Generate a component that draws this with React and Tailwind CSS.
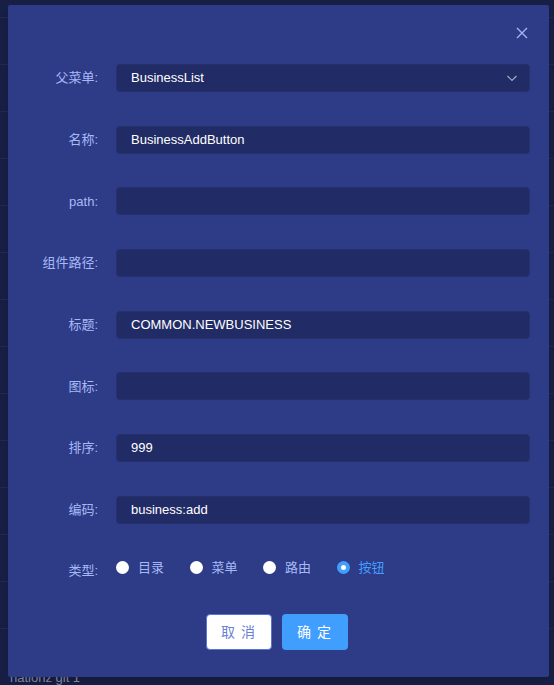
import React, { useState } from 'react';

const fields = [
    { label: '父菜单:', value: 'BusinessList', select: true },
    { label: '名称:', value: 'BusinessAddButton' },
    { label: 'path:', value: '' },
    { label: '组件路径:', value: '' },
    { label: '标题:', value: 'COMMON.NEWBUSINESS' },
    { label: '图标:', value: '' },
    { label: '排序:', value: '999' },
    { label: '编码:', value: 'business:add' },
];

const types = ['目录', '菜单', '路由', '按钮'];

const font = { fontFamily: '"Liberation Sans", "Noto Sans CJK SC", sans-serif' };

const App = () => {
    const [type, setType] = useState('按钮');

    return (
        <div className="relative w-[554px] h-[685px] overflow-hidden bg-[#171f45]" style={font}>
            {/* table rows behind the modal */}
            <div className="pt-[17px]">
                {Array.from({ length: 14 }).map((_, i) => (
                    <div key={i} className="h-[47px] border-t border-[#1f2858]" />
                ))}
            </div>
            <div className="absolute left-[10px] top-[671px] text-[13px] leading-[14px] text-[#8a8fa8]">nationz git 1</div>

            {/* dialog */}
            <div className="absolute left-[8px] top-[5px] w-[541px] h-[672px] bg-[#2e3b87] rounded-[2px] shadow-lg">
                <div className="flex justify-end pt-[21px] pr-[20px] h-[59px]">
                    <button className="w-[14px] h-[14px] text-[#a3b4f0]">
                        <svg viewBox="0 0 14 14" width="14" height="14" fill="none" stroke="currentColor" strokeWidth="1.4">
                            <path d="M2 2 L12 12 M12 2 L2 12" />
                        </svg>
                    </button>
                </div>

                <div className="flex flex-col gap-y-[33.7px] pr-[19px]">
                    {fields.map((f) => (
                        <div key={f.label} className="flex items-center">
                            <label className="w-[90px] shrink-0 text-right text-[13px] text-[#a7b9f5]">{f.label}</label>
                            <div className="ml-[18px] flex-1 h-[28px] flex items-center justify-between px-[14px] bg-[#212b66] border border-[#26306a] rounded-[4px] text-[13px] text-white">
                                <span>{f.value}</span>
                                {f.select && (
                                    <svg viewBox="0 0 12 12" width="12" height="12" fill="none" stroke="#a3abc9" strokeWidth="1.2" className="-mr-[3px]">
                                        <path d="M1.5 4 L6 8.5 L10.5 4" />
                                    </svg>
                                )}
                            </div>
                        </div>
                    ))}

                    <div className="flex items-center -mt-[2px]">
                        <label className="w-[90px] shrink-0 text-right text-[13px] text-[#a7b9f5] pt-[5px]">类型:</label>
                        <div className="ml-[18px] flex items-center">
                            {types.map((t) => {
                                const on = t === type;
                                return (
                                    <div key={t} onClick={() => setType(t)} className="flex items-center mr-[25.5px] cursor-pointer">
                                        <span className={`w-[13px] h-[13px] rounded-full flex items-center justify-center ${on ? 'bg-[#409eff]' : 'bg-white'}`}>
                                            {on && <span className="w-[5px] h-[5px] rounded-full bg-white" />}
                                        </span>
                                        <span className={`ml-[9px] text-[13px] ${on ? 'text-[#409eff]' : 'text-[#a7b9f5]'}`}>{t}</span>
                                    </div>
                                );
                            })}
                        </div>
                    </div>
                </div>

                <div className="flex justify-center gap-[10px] mt-[34px] pr-[4px]">
                    <button className="w-[66px] h-[36px] bg-white border border-[#5b73d9] rounded-[4px] text-[14px] text-[#6b7fd6] tracking-[1px]">取 消</button>
                    <button className="w-[66px] h-[36px] bg-[#409eff] rounded-[4px] text-[14px] text-white tracking-[1px]">确 定</button>
                </div>
            </div>
        </div>
    );
};

export default App;
